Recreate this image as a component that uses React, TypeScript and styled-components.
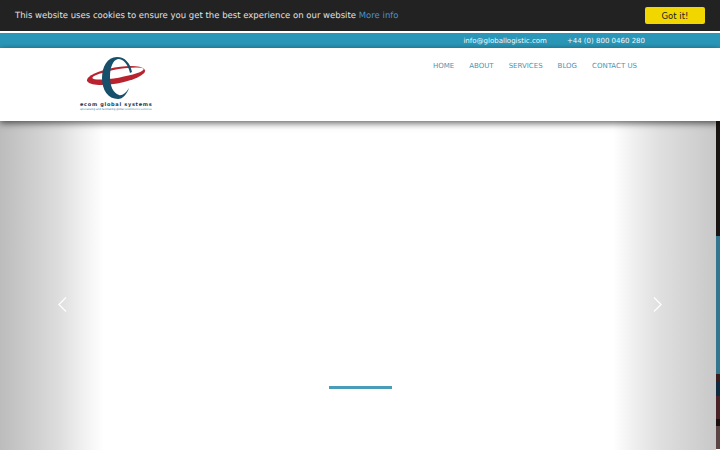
import React from "react";
import styled, { createGlobalStyle } from "styled-components";

const Global = createGlobalStyle`
  html, body { margin: 0; padding: 0; background: #fff; overflow: hidden; }
  body { font-family: "DejaVu Sans", sans-serif; text-rendering: geometricPrecision; }
`;

const Page = styled.div`
  width: 720px;
  height: 450px;
  display: flex;
  flex-direction: column;
  overflow: hidden;
`;

const CookieBar = styled.div`
  height: 31px;
  flex: none;
  background: #222;
  color: #e0e0e0;
  display: flex;
  align-items: center;
  justify-content: space-between;
  padding: 0 15px;
  font-size: 8.5px;
`;

const CookieLink = styled.a`
  color: #4b94c4;
`;

const GotIt = styled.button`
  width: 60px;
  height: 17px;
  border: 0;
  border-radius: 2px;
  background: #f1d600;
  color: #222;
  font: 8.5px "DejaVu Sans", sans-serif;
  padding: 0;
`;

const TopBar = styled.div`
  height: 15px;
  flex: none;
  margin-top: 2px;
  background: #2a97b8;
  color: #f4f8fa;
  display: flex;
  justify-content: flex-end;
  align-items: center;
  gap: 20px;
  padding-right: 75px;
  font-size: 7px;
`;

const Header = styled.header`
  height: 73px;
  flex: none;
  background: #fff;
  display: flex;
  justify-content: space-between;
  align-items: flex-start;
  padding: 0 83px 0 80px;
  position: relative;
  z-index: 1;
  box-shadow: 0 2px 7px rgba(0, 0, 0, 0.65);
`;

const LogoBlock = styled.div`
  margin-top: 8px;
  width: 72px;
  display: flex;
  flex-direction: column;
  align-items: flex-start;
`;

const LogoMark = styled.svg`
  width: 72px;
  height: 46px;
  display: block;
`;

const LogoName = styled.div`
  font-size: 5px;
  line-height: 6px;
  font-weight: 700;
  letter-spacing: 0.7px;
  color: #123a52;
  white-space: nowrap;
`;

const LogoTag = styled.div`
  font-size: 2.6px;
  line-height: 4px;
  color: #2a7fa6;
  white-space: nowrap;
`;

const Nav = styled.nav`
  margin-top: 14px;
  display: flex;
  gap: 15px;
  font-size: 7px;
  color: #3f96b5;
`;

const Hero = styled.main`
  flex: 1;
  display: flex;
  position: relative;
`;

const Slide = styled.div`
  flex: 1;
  position: relative;
  background: linear-gradient(
    90deg,
    #bcbcbc 0,
    #d2d2d2 40px,
    #dedede 60px,
    #f0f0f0 82px,
    #fff 104px,
    #fff 613px,
    #f0f0f0 633px,
    #dfdfdf 660px,
    #c8c8c8 716px
  );
`;

const Strip = styled.div`
  width: 4px;
  display: flex;
  flex-direction: column;
`;

const StripPart = styled.div<{ $h: number; $c: string }>`
  height: ${(p) => p.$h}px;
  background: ${(p) => p.$c};
`;

const Arrow = styled.svg<{ $side: "left" | "right"; $at: number }>`
  position: absolute;
  top: 175px;
  ${(p) => p.$side}: ${(p) => p.$at}px;
  width: 12px;
  height: 17px;
`;

const Indicator = styled.div`
  position: absolute;
  left: 329px;
  top: 265px;
  width: 63px;
  height: 3px;
  background: #4a9db8;
`;

const navItems = ["HOME", "ABOUT", "SERVICES", "BLOG", "CONTACT US"];

const strip: [number, string][] = [
  [115, "#181412"],
  [138, "#33758f"],
  [8, "#3a1c1e"],
  [14, "#0d2a3e"],
  [23, "#4a2226"],
  [7, "#17100f"],
  [23, "#5a4444"],
];

export default function App() {
  return (
    <Page>
      <Global />
      <CookieBar>
        <span>
          This website uses cookies to ensure you get the best experience on our website{" "}
          <CookieLink>More info</CookieLink>
        </span>
        <GotIt>Got it!</GotIt>
      </CookieBar>
      <TopBar>
        <span>info@globallogistic.com</span>
        <span>+44 (0) 800 0460 280</span>
      </TopBar>
      <Header>
        <LogoBlock>
          <LogoMark viewBox="0 0 72 46">
            <g transform="translate(-80 -56)">
              <ellipse
                cx="116"
                cy="75.5"
                rx="29.5"
                ry="8"
                transform="rotate(-10 116 75.5)"
                fill="#b9232f"
              />
              <ellipse
                cx="118"
                cy="73.5"
                rx="26"
                ry="4.2"
                transform="rotate(-10 118 73.5)"
                fill="#fff"
              />
              <path
                d="M117 57C107 57 102 67 102 78C102 90 108 99 118 99C123 99 127 94 129 88C126 93 122 96 119 95C113 93 110 86 110 77C110 67 113 60 118 59C124 59 128 65 130 73L132 72C130 63 125 57 117 57z"
                fill="#17506b"
              />
            </g>
          </LogoMark>
          <LogoName>ecom global systems</LogoName>
          <LogoTag>specialising and facilitating global ecommerce services</LogoTag>
        </LogoBlock>
        <Nav>
          {navItems.map((n) => (
            <span key={n}>{n}</span>
          ))}
        </Nav>
      </Header>
      <Hero>
        <Slide>
          <Arrow $side="left" $at={56} viewBox="0 0 12 17">
            <path d="M10 1.5 3 8.5l7 7" fill="none" stroke="#fff" strokeWidth="1.4" opacity="0.9" />
          </Arrow>
          <Arrow $side="right" $at={52} viewBox="0 0 12 17">
            <path d="M2 1.5l7 7-7 7" fill="none" stroke="#fff" strokeWidth="1.4" opacity="0.9" />
          </Arrow>
          <Indicator />
        </Slide>
        <Strip>
          {strip.map(([h, c], i) => (
            <StripPart key={i} $h={h} $c={c} />
          ))}
        </Strip>
      </Hero>
    </Page>
  );
}
